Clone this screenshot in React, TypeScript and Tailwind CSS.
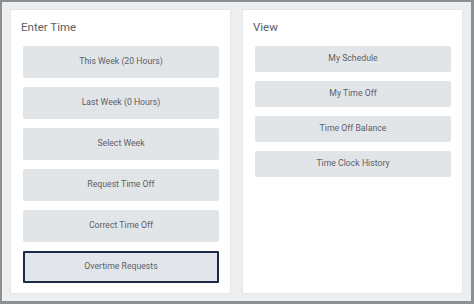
import React from "react";

const left = [
  "This Week (20 Hours)",
  "Last Week (0 Hours)",
  "Select Week",
  "Request Time Off",
  "Correct Time Off",
];
const right = ["My Schedule", "My Time Off", "Time Off Balance", "Time Clock History"];

export default function App() {
  return (
    <div
      className="w-[474px] h-[304px] box-border border-t-2 border-l-2 border-r-[3px] border-b-[3px] border-[#8e8f91] bg-[#eceef0] flex gap-[11px] pt-[7px] pl-[8px] pr-[8px] pb-[7px]"
      style={{ fontFamily: "Roboto, 'Liberation Sans', sans-serif" }}
    >
      <div className="w-[221px] h-[285px] bg-white border border-[#e4e6e8] rounded-[2px] pl-[12px] pr-[11px] pt-[9px] flex flex-col">
        <div className="text-[11.5px] leading-[16px] text-[#5c6066] ml-[-2px]">Enter Time</div>
        <div className="mt-[11px] flex flex-col gap-[9px]">
          {left.map((t) => (
            <div
              key={t}
              className="h-[32px] bg-[#e2e5e8] rounded-[2px] flex items-center justify-center text-[8.7px] text-[#5c6168]"
            >
              {t}
            </div>
          ))}
          <div className="h-[32px] bg-[#e2e6ea] rounded-[1px] border-2 border-[#1b2b45] flex items-center justify-center text-[8.7px] text-[#5c6168]">
            Overtime Requests
          </div>
        </div>
      </div>
      <div className="w-[221px] h-[285px] bg-white border border-[#e4e6e8] rounded-[2px] pl-[12px] pr-[11px] pt-[9px] flex flex-col">
        <div className="text-[11.5px] leading-[16px] text-[#5c6066] ml-[-2px]">View</div>
        <div className="mt-[11px] flex flex-col gap-[9px]">
          {right.map((t) => (
            <div
              key={t}
              className="h-[26px] bg-[#e2e5e8] rounded-[2px] flex items-center justify-center text-[8.7px] text-[#5c6168]"
            >
              {t}
            </div>
          ))}
        </div>
      </div>
    </div>
  );
}
